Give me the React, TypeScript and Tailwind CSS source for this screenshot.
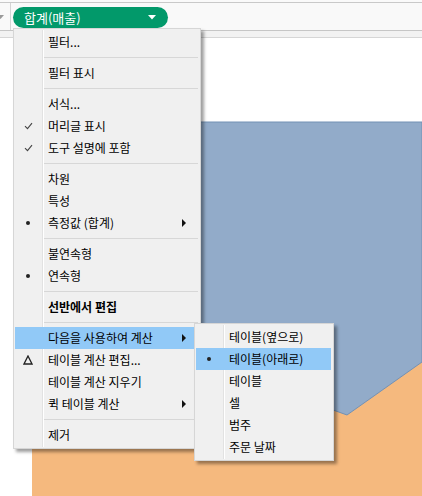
import React from "react";

const FONT = { fontFamily: '"Noto Sans CJK KR", "Noto Sans", sans-serif' };

type Item =
  | { sep: true }
  | {
      label: string;
      mark?: "check" | "dot" | "delta";
      arrow?: boolean;
      bold?: boolean;
      hl?: boolean;
    };

const mainItems: Item[] = [
  { label: "필터..." },
  { sep: true },
  { label: "필터 표시" },
  { sep: true },
  { label: "서식..." },
  { label: "머리글 표시", mark: "check" },
  { label: "도구 설명에 포함", mark: "check" },
  { sep: true },
  { label: "차원" },
  { label: "특성" },
  { label: "측정값 (합계)", mark: "dot", arrow: true },
  { sep: true },
  { label: "불연속형" },
  { label: "연속형", mark: "dot" },
  { sep: true },
  { label: "선반에서 편집", bold: true },
  { sep: true },
  { label: "다음을 사용하여 계산", arrow: true, hl: true },
  { label: "테이블 계산 편집...", mark: "delta" },
  { label: "테이블 계산 지우기" },
  { label: "퀵 테이블 계산", arrow: true },
  { sep: true },
  { label: "제거" },
];

const subItems: Item[] = [
  { label: "테이블(옆으로)" },
  { label: "테이블(아래로)", mark: "dot", hl: true },
  { label: "테이블" },
  { label: "셀" },
  { label: "범주" },
  { label: "주문 날짜" },
];

function Mark({ m }: { m?: "check" | "dot" | "delta" }) {
  if (m === "check")
    return (
      <svg width="9" height="8" viewBox="0 0 9 8">
        <path d="M1 4.2 L3.5 6.6 L8 1.2" fill="none" stroke="#444" strokeWidth="1.1" />
      </svg>
    );
  if (m === "dot") return <div className="w-[4px] h-[4px] rounded-full bg-[#222]" />;
  if (m === "delta")
    return (
      <svg width="10" height="10" viewBox="0 0 10 10">
        <path d="M5 1 L9 9 L1 9 Z" fill="none" stroke="#222" strokeWidth="1.3" strokeLinejoin="miter" />
      </svg>
    );
  return null;
}

function Menu({ items, width, rightGap }: { items: Item[]; width: number; rightGap: number }) {
  return (
    <div
      className="relative bg-[#f0f0f0] border border-[#d6d6d6] shadow-[3px_3px_3px_rgba(0,0,0,0.38)] py-[2px]"
      style={{ width }}
    >
      {/* gutter line */}
      <div className="absolute top-[1px] bottom-[1px] left-[28px] w-[1px] bg-[#e2e2e2]" />
      <div className="absolute top-[1px] bottom-[1px] left-[29px] w-[1px] bg-[#ffffff]" />
      {items.map((it, i) =>
        "sep" in it ? (
          <div key={i} className="h-[9px] flex items-center pl-[30px]" style={{ paddingRight: 2 }}>
            <div className="h-[1px] w-full bg-[#d7d7d7]" />
          </div>
        ) : (
          <div
            key={i}
            className={
              "relative h-[22px] flex items-center ml-[1px] " + (it.hl ? "bg-[#91c9f7]" : "")
            }
            style={{ marginRight: rightGap }}
          >
            <div className="w-[26px] flex justify-center items-center">
              <Mark m={it.mark} />
            </div>
            <div
              className={"pl-[7px] text-[12px] text-black leading-none whitespace-nowrap " + (it.bold ? "font-bold" : "")}
            >
              {it.label}
            </div>
            {it.arrow && (
              <svg className="absolute right-[8px] top-[7px]" width="5" height="8" viewBox="0 0 5 8">
                <path d="M0 0 L4 4 L0 8 Z" fill="#111" />
              </svg>
            )}
          </div>
        )
      )}
    </div>
  );
}

export default function App() {
  return (
    <div className="relative w-[422px] h-[496px] bg-white overflow-hidden" style={FONT}>
      {/* header */}
      <div className="h-[2px] bg-[#fafafa]" />
      <div className="h-[1px] bg-[#c9c9c9]" />
      <div className="h-[27px] bg-[#f9f9f9] flex items-center">
        <div className="w-[10px] h-full relative">
          <svg className="absolute left-0 top-[11px]" width="4" height="6" viewBox="0 0 4 6">
            <path d="M-3 1 L4 1 L0.5 5 Z" fill="#9a9a9a" />
          </svg>
        </div>
        <div className="w-[1px] h-full bg-[#d4d4d4]" />
        <div className="ml-[2px] h-[21px] w-[155px] rounded-full bg-[#02996a] flex items-center pl-[11px] pr-[12px] justify-between mt-[2px]">
          <span className="text-white text-[13px] leading-none">합계(매출)</span>
          <svg width="8" height="5" viewBox="0 0 8 5">
            <path d="M0 0 L8 0 L4 4.5 Z" fill="#ffffff" />
          </svg>
        </div>
      </div>
      <div className="h-[1px] bg-[#c6c6c6]" />
      <div className="h-[6px] bg-[#f2f2f2]" />
      <div className="h-[1px] bg-[#d6d6d6]" />

      {/* chart */}
      <svg width="422" height="458" viewBox="0 38 422 458" className="block">
        <polygon points="32,122 422,122 422,496 32,496" fill="#f5b97e" />
        <polygon
          points="32,122 422,122 422,362 347,415 200,362 32,300"
          fill="#92abc9"
          stroke="#7391b4"
          strokeWidth="1"
        />
      </svg>

      {/* main menu */}
      <div className="absolute left-[13px] top-[28px]">
        <Menu items={mainItems} width={188} rightGap={5} />
      </div>

      {/* submenu */}
      <div className="absolute left-[194px] top-[323px]">
        <Menu items={subItems} width={140} rightGap={2} />
      </div>
    </div>
  );
}
